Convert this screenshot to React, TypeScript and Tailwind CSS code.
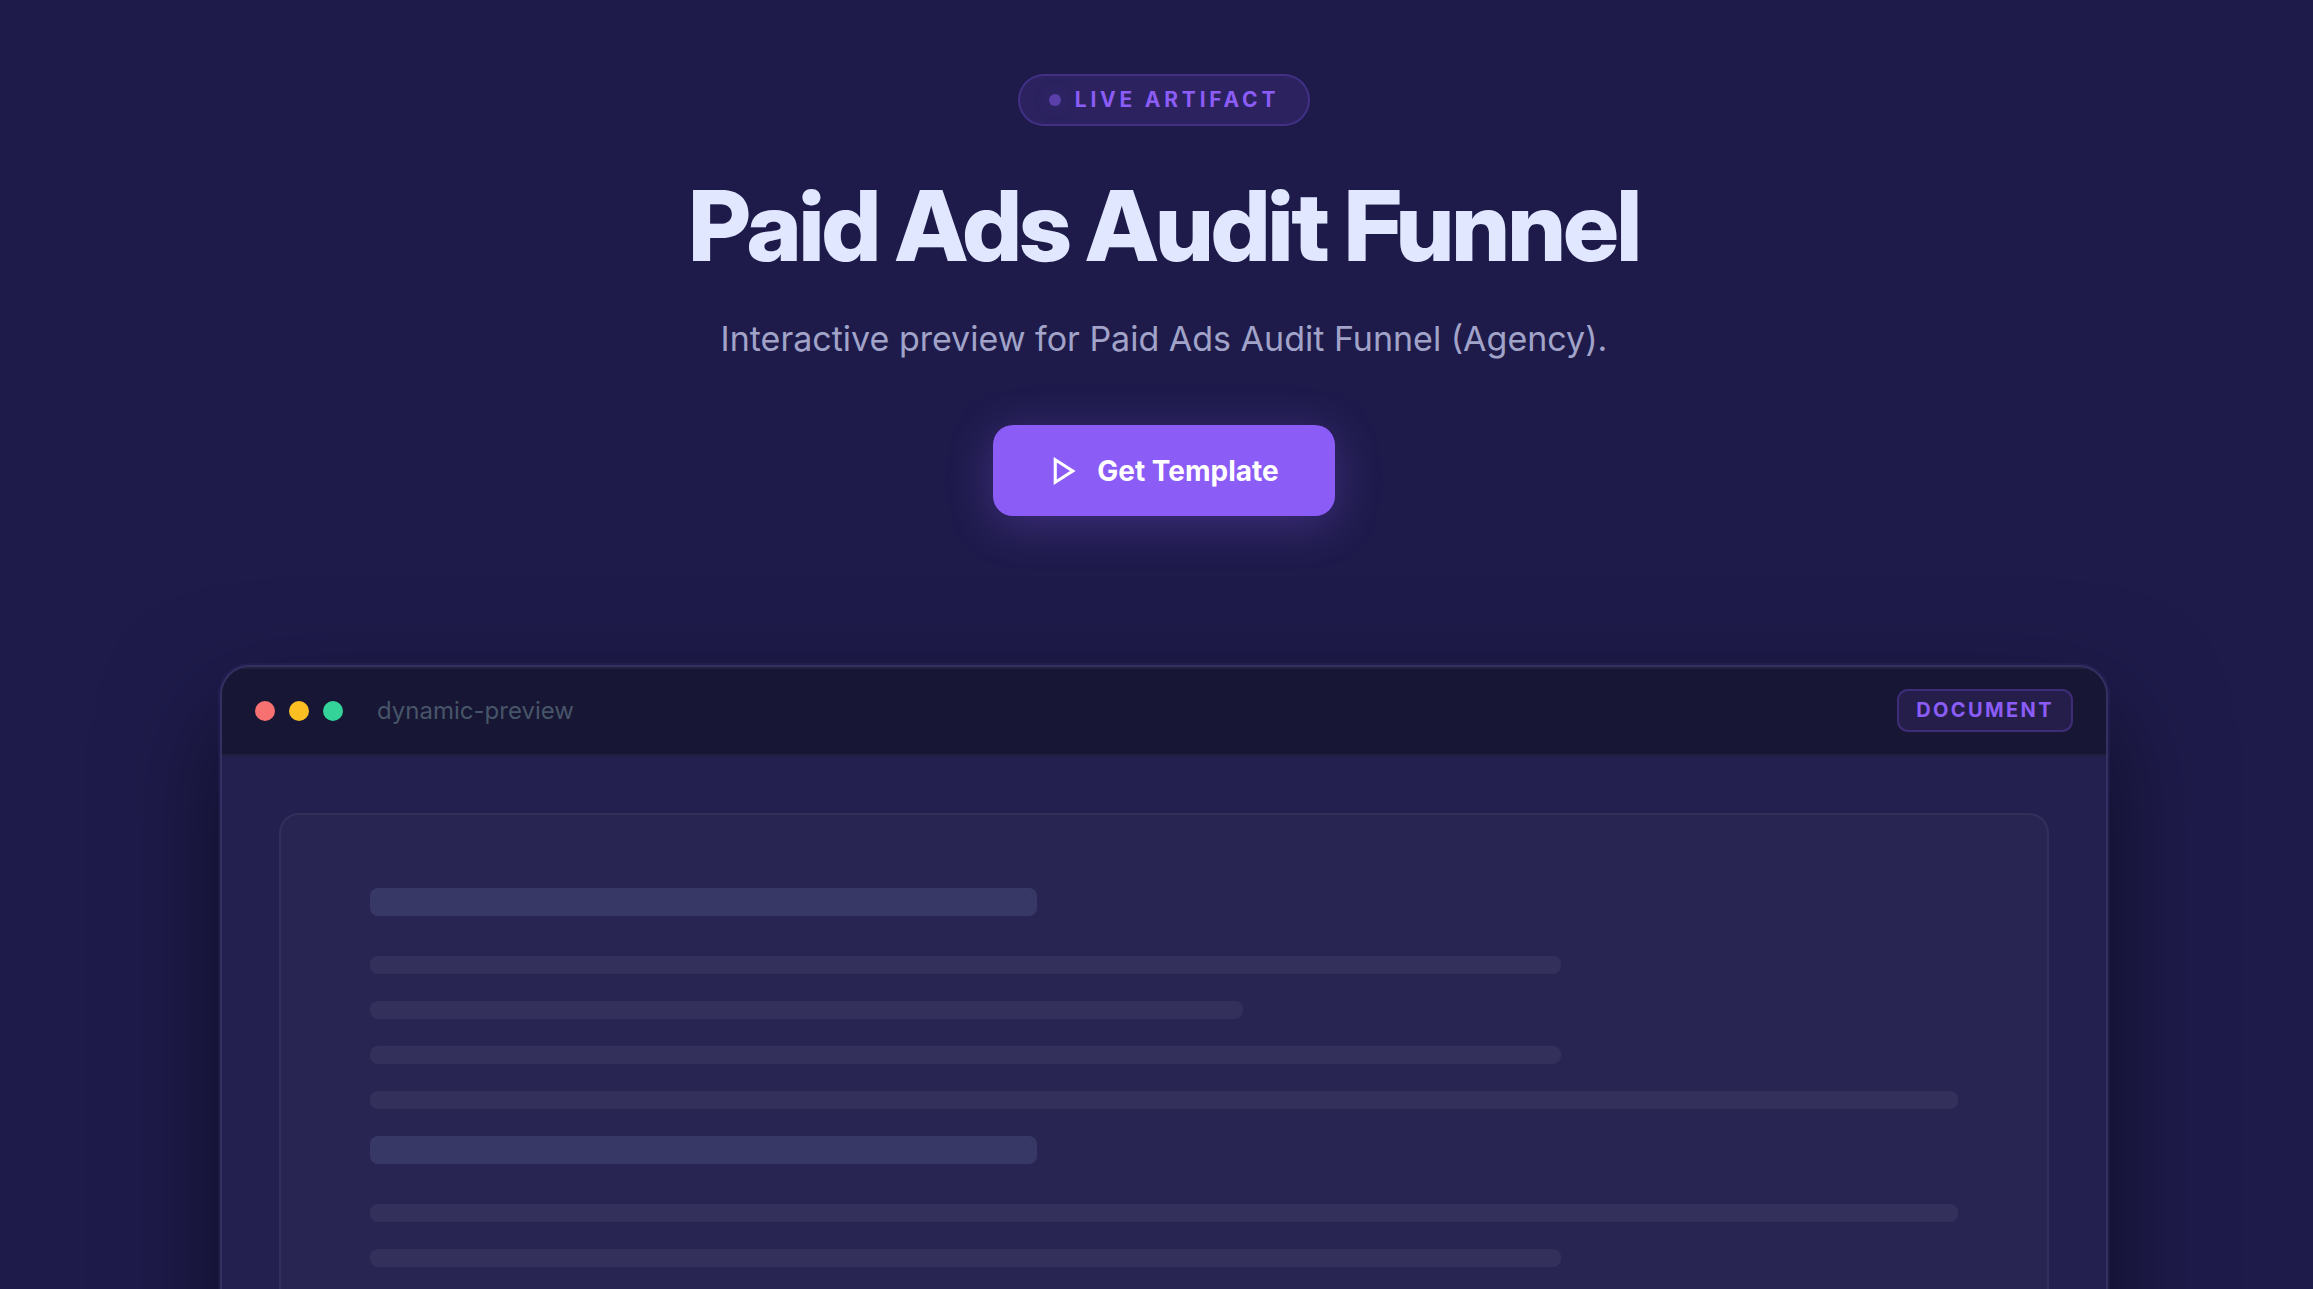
import React from 'react';

type Line = {
  id: number;
  kind: 'heading' | 'text';
  width: string;
};

const lines: Line[] = [
  { id: 1, kind: 'heading', width: 'w-[42%]' },
  { id: 2, kind: 'text', width: 'w-[75%]' },
  { id: 3, kind: 'text', width: 'w-[55%]' },
  { id: 4, kind: 'text', width: 'w-[75%]' },
  { id: 5, kind: 'text', width: 'w-full' },
  { id: 6, kind: 'heading', width: 'w-[42%]' },
  { id: 7, kind: 'text', width: 'w-full' },
  { id: 8, kind: 'text', width: 'w-[75%]' },
  { id: 9, kind: 'text', width: 'w-[55%]' },
];

const Hero = () => {
  return (
    <header className="flex flex-col items-center text-center">
      <div className="flex items-center gap-[14px] h-[52px] px-[29px] rounded-full border-2 border-[#8b5cf6]/25 bg-[#8b5cf6]/12">
        <span className="size-3 rounded-full bg-[#8b5cf6]/50 shadow-[0_0_20px_rgba(139,92,246,0.2)]" />
        <span className="text-[21px] leading-6 font-bold tracking-[0.18em] text-[#8b5cf6]">LIVE ARTIFACT</span>
      </div>
      <h1 className="mt-[46px] font-['Inter_Display','Inter',sans-serif] text-[97px] leading-[107px] font-extrabold tracking-tight text-[#e0e7ff]">
        Paid Ads Audit Funnel
      </h1>
      <p className="mt-[33px] text-[34px] leading-[54px] text-[#a1a3c8]">
        Interactive preview for Paid Ads Audit Funnel (Agency).
      </p>
      <button
        type="button"
        className="mt-[59px] flex items-center gap-[18px] h-[91px] px-14 rounded-[20px] bg-[#8b5cf6] text-[28px] font-bold text-white shadow-[0_8px_45px_rgba(139,92,246,0.3)]"
      >
        <svg className="size-[30px]" viewBox="0 0 24 24" fill="none" stroke="currentColor" strokeWidth="2.5">
          <polygon points="5 3 19 12 5 21 5 3" />
        </svg>
        Get Template
      </button>
    </header>
  );
};

const PreviewWindow = () => {
  return (
    <section className="mt-[149px] w-full max-w-[1888px] rounded-[30px] border-2 border-[#34305f] bg-[#231f4e] overflow-hidden shadow-[0_0_0_2px_rgba(139,92,246,0.08),0_45px_112px_rgba(0,0,0,0.5)]">
      <div className="flex items-center justify-between px-[33px] py-[22px] bg-[#171634] border-b-2 border-[#211f40] shadow-[inset_0_2px_0_rgba(255,255,255,0.05)]">
        <div className="flex items-center gap-[14px]">
          <span className="size-5 rounded-full bg-[#f87171]" />
          <span className="size-5 rounded-full bg-[#fbbf24]" />
          <span className="size-5 rounded-full bg-[#34d399]" />
          <span className="ml-5 text-[24px] leading-7 text-[#475569]">dynamic-preview</span>
        </div>
        <span className="px-[17px] py-[7px] rounded-[11px] border-2 border-[#8b5cf6]/25 bg-[#8b5cf6]/12 text-[20px] leading-[25px] font-bold tracking-[0.12em] text-[#8b5cf6]">
          DOCUMENT
        </span>
      </div>
      <div className="p-[57px]">
        <div className="flex flex-col gap-[27px] px-[89px] py-[73px] rounded-[20px] border-2 border-[#322f5a] bg-[#282553]">
          {lines.map((line) =>
            line.kind === 'heading' ? (
              <div key={line.id} className={`h-7 mb-[13px] rounded-[8px] bg-[#383867] ${line.width}`} />
            ) : (
              <div key={line.id} className={`h-[18px] rounded-[8px] bg-[#33305b] ${line.width}`} />
            )
          )}
        </div>
      </div>
    </section>
  );
};

const App = () => {
  return (
    <div className="h-screen overflow-hidden bg-[#1e1b4b] font-['Inter',sans-serif]">
      <main className="flex flex-col items-center pt-[74px] pl-[15px]">
        <Hero />
        <PreviewWindow />
      </main>
    </div>
  );
};

export default App;
